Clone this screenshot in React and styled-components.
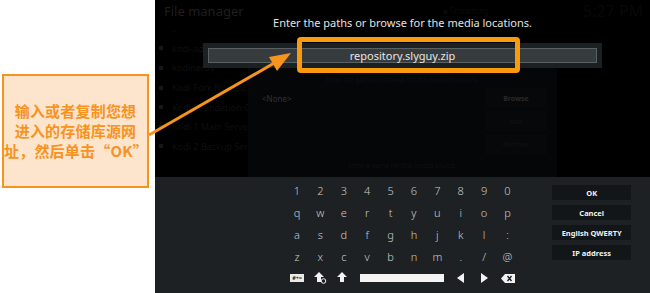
import React from 'react';
import styled, { createGlobalStyle } from 'styled-components';

const ORANGE = '#f7941d';

const Global = createGlobalStyle`
  html, body { margin: 0; padding: 0; background: #fff; }
  body {
    width: 650px; height: 293px; overflow: hidden;
    font-family: "Noto Sans", "Open Sans", sans-serif;
  }
`;

const Page = styled.div`
  position: relative;
  display: flex;
  width: 650px;
  height: 293px;
  background: #fff;
  overflow: hidden;
`;

const Side = styled.div`
  flex: none;
  width: 155px;
  box-sizing: border-box;
  padding: 74px 0 0 2px;
`;

const Callout = styled.div`
  box-sizing: border-box;
  width: 147px;
  height: 114px;
  border: 2px solid ${ORANGE};
  background: #fde4cd;
  display: flex;
  flex-direction: column;
  align-items: center;
  justify-content: center;
  color: #f7931e;
  font-family: "Noto Sans CJK SC", sans-serif;
  font-weight: 700;
  font-size: 15px;
  line-height: 20px;
  letter-spacing: 0.2px;
  text-align: center;
`;

const Screen = styled.div`
  flex: 1;
  display: flex;
  flex-direction: column;
  background: #000;
  min-width: 0;
`;

const Top = styled.div`
  height: 177px;
  display: grid;
  overflow: hidden;
  & > * { grid-area: 1 / 1; }
`;

/* --- background file manager layer --- */
const FileManager = styled.div`
  display: flex;
  flex-direction: column;
  padding: 3px 0 0 9px;
`;

const Header = styled.div`
  display: flex;
  align-items: center;
  height: 15px;
  white-space: nowrap;
`;

const FMTitle = styled.div`
  width: 279px;
  font-size: 13px;
  color: #1e1e1e;
`;

const Status = styled.div`
  width: 140px;
  font-size: 8px;
  color: #0a0a0a;
`;

const Clock = styled.div`
  font-size: 16px;
  color: #080808;
`;

const FMList = styled.div`
  display: flex;
  flex-direction: column;
  margin: 1px 0 0 -5px;
`;

const FMItem = styled.div`
  height: 19.6px;
  display: flex;
  align-items: center;
  gap: 9px;
  font-size: 9px;
  color: #0f0f0f;
  white-space: nowrap;
`;

const Bullet = styled.span`
  width: 4px;
  height: 4px;
  background: ${p => (p.$hidden ? 'transparent' : '#161616')};
`;

/* --- dimmed source dialog layer --- */
const SourceDialog = styled.div`
  margin: 64px 0 0 93px;
  width: 309px;
  height: 113px;
  background: #050607;
  box-sizing: border-box;
  padding-top: 12px;
  display: flex;
  flex-direction: column;
  align-items: center;
`;

const Faint = styled.div`
  font-size: 6.5px;
  line-height: 8px;
  color: #101010;
  white-space: nowrap;
`;

const DialogBody = styled.div`
  align-self: stretch;
  display: flex;
  justify-content: space-between;
  margin: 4px 0 8px;
  padding: 0 10px 0 14px;
`;

const NoneLabel = styled.div`
  height: 20px;
  display: flex;
  align-items: center;
  font-size: 8px;
  color: #333;
`;

const DialogButtons = styled.div`
  display: flex;
  flex-direction: column;
  gap: 3px;
`;

const DialogButton = styled.div`
  width: 62px;
  height: 20px;
  display: flex;
  align-items: center;
  justify-content: center;
  background: #070809;
  font-size: 7px;
  font-weight: ${p => (p.$bold ? 700 : 400)};
  color: ${p => (p.$bold ? '#2a2a2a' : '#121212')};
`;

/* --- keyboard heading & input layer --- */
const KeyboardHead = styled.div`
  display: flex;
  flex-direction: column;
  align-items: center;
`;

const Heading = styled.div`
  margin-top: 16px;
  font-size: 11px;
  line-height: 14px;
  color: #e2e2e2;
  white-space: nowrap;
`;

const InputBox = styled.div`
  margin-top: 13px;
  width: 399px;
  height: 25px;
  box-sizing: border-box;
  padding: 5px;
  background: #1b2022;
`;

const InputField = styled.div`
  height: 15px;
  box-sizing: border-box;
  border: 1px solid #5b6062;
  background: #363b3d;
  display: flex;
  align-items: center;
  justify-content: center;
  font-size: 11px;
  color: #e6e6e6;
`;

/* --- keyboard --- */
const Keyboard = styled.div`
  height: 116px;
  box-sizing: border-box;
  background: #1d2123;
  display: flex;
  align-items: flex-start;
  gap: 33px;
  padding: 2px 19px 0 130.3px;
`;

const KeyGrid = styled.div`
  display: grid;
  grid-template-columns: repeat(10, 23.4px);
  grid-auto-rows: 22px;
`;

const Key = styled.div`
  grid-column: span ${p => p.$span || 1};
  display: flex;
  align-items: center;
  justify-content: center;
  font-size: 11px;
  font-weight: 300;
  color: #c9c9c9;
`;

const SpaceBar = styled.div`
  width: 100%;
  margin: 0 5px;
  height: 8px;
  background: #f4f4f4;
`;

const SymbolKey = styled.div`
  width: 14px;
  height: 8px;
  background: #eaeaea;
  color: #1d2123;
  font-size: 5.5px;
  font-weight: 700;
  line-height: 8px;
  text-align: center;
  letter-spacing: -0.2px;
`;

const Buttons = styled.div`
  margin-top: 6px;
  display: flex;
  flex-direction: column;
  gap: 5px;
`;

const KButton = styled.div`
  width: 79px;
  height: 15px;
  background: #121618;
  display: flex;
  align-items: center;
  justify-content: center;
  font-size: 7.5px;
  font-weight: 700;
  color: #f0f0f0;
  white-space: nowrap;
`;

/* --- annotation overlays --- */
const Highlight = styled.div`
  position: absolute;
  left: 297px;
  top: 37px;
  width: 223px;
  height: 36px;
  box-sizing: border-box;
  border: 5px solid #fb9a0e;
  border-radius: 4px;
  pointer-events: none;
`;

const ArrowSvg = styled.svg`
  position: absolute;
  left: 0;
  top: 0;
  pointer-events: none;
`;

const Arrow = () => (
  <ArrowSvg width="650" height="293" viewBox="0 0 650 293">
    <line x1="149" y1="135" x2="276" y2="62" stroke={ORANGE} strokeWidth="3" />
    <polygon points="291,53 269,57 277,71" fill={ORANGE} />
  </ArrowSvg>
);

const BlockArrow = ({ lock }) => (
  <svg width="13" height="12" viewBox="0 0 13 12">
    <path d="M5 0 L10 5 L7 5 L7 10 L3 10 L3 5 L0 5 Z" fill="#f2f2f2" />
    {lock && <circle cx="9.5" cy="9" r="2.3" fill="#1d2123" stroke="#f2f2f2" strokeWidth="1" />}
  </svg>
);

const Tri = ({ dir }) => (
  <svg width="8" height="10" viewBox="0 0 8 10">
    {dir === 'left' ? <path d="M7 0 V10 L0 5 Z" fill="#f2f2f2" /> : <path d="M1 0 V10 L8 5 Z" fill="#f2f2f2" />}
  </svg>
);

const Backspace = () => (
  <svg width="14" height="9" viewBox="0 0 14 9">
    <path d="M0 4.5 L4 0 H14 V9 H4 Z" fill="#f2f2f2" />
    <path d="M6.5 2 L10.5 7 M10.5 2 L6.5 7" stroke="#1d2123" strokeWidth="1.4" />
  </svg>
);

const rows = [
  ['1', '2', '3', '4', '5', '6', '7', '8', '9', '0'],
  ['q', 'w', 'e', 'r', 't', 'y', 'u', 'i', 'o', 'p'],
  ['a', 's', 'd', 'f', 'g', 'h', 'j', 'k', 'l', ':'],
  ['z', 'x', 'c', 'v', 'b', 'n', 'm', '.', '/', '@'],
];

const fmItems = [
  { name: '..', hidden: true },
  { name: 'kodi-addons' },
  { name: 'kodinerds' },
  { name: 'Kodi Fork Nomad' },
  { name: 'Kodi Foundation Group' },
  { name: 'Kodi 1 Main Server' },
  { name: 'Kodi 2 Backup Server' },
];

export default function App() {
  return (
    <Page>
      <Global />
      <Side>
        <Callout>
          <div>输入或者复制您想</div>
          <div>进入的存储库源网</div>
          <div>址，然后单击“OK”</div>
        </Callout>
      </Side>
      <Screen>
        <Top>
          <FileManager>
            <Header>
              <FMTitle>File manager</FMTitle>
              <Status>■ Streaming</Status>
              <Clock>5:27 PM</Clock>
            </Header>
            <FMList>
              {fmItems.map(it => (
                <FMItem key={it.name}>
                  <Bullet $hidden={it.hidden} />
                  {it.name}
                </FMItem>
              ))}
            </FMList>
          </FileManager>
          <SourceDialog>
            <Faint>Enter the paths or browse for the media locations.</Faint>
            <DialogBody>
              <NoneLabel>&lt;None&gt;</NoneLabel>
              <DialogButtons>
                <DialogButton $bold>Browse</DialogButton>
                <DialogButton>Add</DialogButton>
                <DialogButton>Remove</DialogButton>
              </DialogButtons>
            </DialogBody>
            <Faint>Enter a name for this media source.</Faint>
          </SourceDialog>
          <KeyboardHead>
            <Heading>Enter the paths or browse for the media locations.</Heading>
            <InputBox>
              <InputField>repository.slyguy.zip</InputField>
            </InputBox>
          </KeyboardHead>
        </Top>
        <Keyboard>
          <KeyGrid>
            {rows.flat().map((k, i) => (
              <Key key={i}>{k}</Key>
            ))}
            <Key><SymbolKey>#+=</SymbolKey></Key>
            <Key><BlockArrow lock /></Key>
            <Key><BlockArrow /></Key>
            <Key $span={4}><SpaceBar /></Key>
            <Key><Tri dir="left" /></Key>
            <Key><Tri dir="right" /></Key>
            <Key><Backspace /></Key>
          </KeyGrid>
          <Buttons>
            <KButton>OK</KButton>
            <KButton>Cancel</KButton>
            <KButton>English QWERTY</KButton>
            <KButton>IP address</KButton>
          </Buttons>
        </Keyboard>
      </Screen>
      <Highlight />
      <Arrow />
    </Page>
  );
}
